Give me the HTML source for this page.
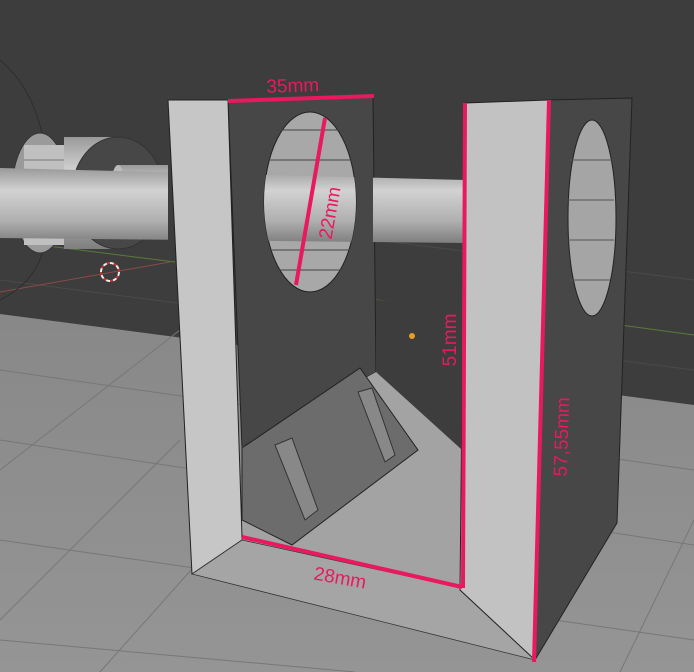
<!DOCTYPE html>
<html><head><style>html,body{margin:0;padding:0;background:#3d3d3d;overflow:hidden;width:694px;height:672px}svg{display:block}</style></head>
<body>
<svg width="694" height="672" viewBox="0 0 694 672" xmlns="http://www.w3.org/2000/svg" font-family="Liberation Sans, sans-serif" overflow="hidden">
<defs>
<linearGradient id="sh" x1="0" y1="0" x2="0" y2="1">
<stop offset="0" stop-color="#9a9a9a"/><stop offset="0.3" stop-color="#d2d2d2"/><stop offset="0.7" stop-color="#b0b0b0"/><stop offset="1" stop-color="#7e7e7e"/></linearGradient>
<linearGradient id="fl" x1="0" y1="0" x2="0" y2="1">
<stop offset="0" stop-color="#888"/><stop offset="1" stop-color="#959595"/></linearGradient>
<clipPath id="cp"><ellipse cx="310" cy="202" rx="46" ry="90"/><rect x="373" y="0" width="100" height="400"/><rect x="0" y="0" width="168" height="400"/></clipPath>
</defs>
<rect width="694" height="672" fill="#3d3d3d"/>
<polygon points="0,314 694,405 694,672 0,672" fill="url(#fl)"/>
<g stroke="#777" stroke-width="1">
<line x1="0" y1="370" x2="694" y2="470"/><line x1="0" y1="440" x2="694" y2="545"/><line x1="0" y1="540" x2="694" y2="640"/><line x1="0" y1="640" x2="355" y2="672"/>
<line x1="180" y1="330" x2="0" y2="470"/><line x1="180" y1="440" x2="0" y2="620"/><line x1="200" y1="560" x2="100" y2="672"/><line x1="694" y1="520" x2="620" y2="672"/>
</g>
<g stroke="#4a4a4a" stroke-width="1">
<line x1="0" y1="280" x2="694" y2="370"/><line x1="376" y1="240" x2="694" y2="280"/></g>
<line x1="0" y1="292" x2="170" y2="262" stroke="#8a4a4a" stroke-width="1"/>
<line x1="40" y1="245" x2="175" y2="262" stroke="#5a7a3a" stroke-width="1"/>
<line x1="376" y1="300" x2="460" y2="308" stroke="#5a7a3a" stroke-width="1"/>
<line x1="620" y1="325" x2="694" y2="335" stroke="#5a7a3a" stroke-width="1"/>
<path d="M0,60 Q60,110 45,240 Q40,280 0,300" fill="none" stroke="#2e2e2e" stroke-width="1"/>
<ellipse cx="40" cy="193" rx="28" ry="60" fill="#9a9a9a" stroke="#333"/>
<rect x="0" y="175" width="30" height="50" fill="url(#sh)"/>
<rect x="24" y="145" width="44" height="100" fill="#c0c0c0"/>
<g stroke="#777" stroke-width="1">
<line x1="24" y1="160" x2="68" y2="160"/><line x1="24" y1="175" x2="68" y2="175"/><line x1="24" y1="190" x2="68" y2="190"/><line x1="24" y1="205" x2="68" y2="205"/><line x1="24" y1="220" x2="68" y2="220"/><line x1="24" y1="235" x2="68" y2="235"/></g>
<rect x="64" y="137" width="50" height="112" fill="url(#sh)"/>
<ellipse cx="118" cy="193" rx="46" ry="56" fill="#474747" stroke="#333"/>
<rect x="118" y="165" width="50" height="62" fill="url(#sh)"/>
<ellipse cx="118" cy="196" rx="8" ry="31" fill="#bbb"/>
<polygon points="228,100 373,95 376,372 242,447" fill="#474747" stroke="#222"/>
<polygon points="376,300 462,305 462,450 376,372" fill="#3d3d3d"/>
<ellipse cx="310" cy="202" rx="46" ry="90" fill="#a8a8a8" stroke="#222"/>
<g stroke="#444" stroke-width="1"><line x1="275" y1="130" x2="345" y2="130"/><line x1="268" y1="160" x2="352" y2="160"/><line x1="268" y1="250" x2="350" y2="250"/><line x1="275" y1="270" x2="345" y2="270"/></g>
<g clip-path="url(#cp)"><polygon points="0,168 465,180 465,243 0,238" fill="url(#sh)"/></g>
<polygon points="242,447 376,372 462,450 462,588 242,540" fill="#a3a3a3"/>
<polygon points="242,448 360,368 418,450 292,545 242,520" fill="#6c6c6c" stroke="#222"/>
<polygon points="275,445 292,438 318,510 305,520" fill="#888" stroke="#333"/>
<polygon points="358,392 372,388 395,455 385,462" fill="#888" stroke="#333"/>
<polygon points="168,100 228,100 242,537 242,540 192,574" fill="#c6c6c6" stroke="#222"/>
<polygon points="192,574 242,540 462,588 535,660" fill="#a5a5a5" stroke="#333" stroke-width="0.8"/>
<polygon points="548,100 632,98 617,523 535,660" fill="#474747" stroke="#222"/>
<ellipse cx="592" cy="218" rx="24" ry="98" fill="#a5a5a5" stroke="#222"/>
<g stroke="#555"><line x1="570" y1="160" x2="612" y2="160"/><line x1="568" y1="200" x2="614" y2="200"/><line x1="568" y1="240" x2="614" y2="240"/><line x1="570" y1="280" x2="610" y2="280"/></g>
<polygon points="465,103 548,100 535,660 460,590" fill="#c2c2c2" stroke="#222"/>
<circle cx="110" cy="272" r="9" fill="none" stroke="#eee" stroke-width="2" stroke-dasharray="4 3"/>
<circle cx="110" cy="272" r="9" fill="none" stroke="#c33" stroke-width="2" stroke-dasharray="3 4" stroke-dashoffset="3"/>
<circle cx="412" cy="336" r="3" fill="#e8a020"/>
<g stroke="#e8195f" stroke-width="4" stroke-linecap="butt">
<line x1="228" y1="101" x2="374" y2="96"/>
<line x1="325" y1="118" x2="296" y2="285"/>
<line x1="465" y1="103" x2="463" y2="588"/>
<line x1="549" y1="100" x2="534" y2="662"/>
<line x1="242" y1="537" x2="462" y2="587"/>
</g>
<g fill="#e8195f" font-size="19">
<text x="293" y="92" text-anchor="middle" transform="rotate(-2 293 92)">35mm</text>
<text transform="translate(336,214) rotate(-80)" text-anchor="middle">22mm</text>
<text transform="translate(456,340) rotate(-90)" text-anchor="middle">51mm</text>
<text transform="translate(568,437) rotate(-88)" text-anchor="middle">57,55mm</text>
<text transform="translate(339,584) rotate(10)" text-anchor="middle">28mm</text>
</g>
</svg>
</body></html>
